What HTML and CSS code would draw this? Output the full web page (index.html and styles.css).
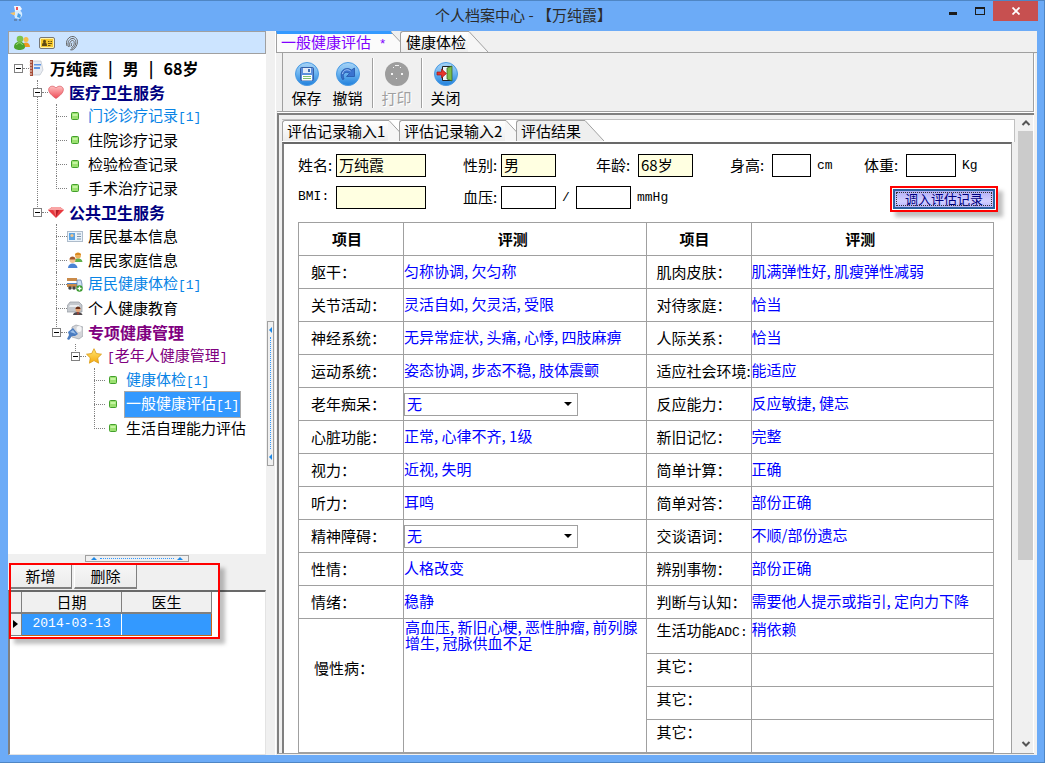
FILE: index.html
```html
<!DOCTYPE html>
<html lang="zh-CN">
<head>
<meta charset="utf-8">
<title>个人档案中心 - 【万纯霞】</title>
<link rel="stylesheet" href="styles.css">
</head>
<body>
<svg width="0" height="0" class="defs" aria-hidden="true">
  <defs>
    <linearGradient id="gDisc" x1="0" y1="0" x2="0" y2="1"><stop offset="0" stop-color="#a9d4f6"/><stop offset=".45" stop-color="#6fb6f0"/><stop offset="1" stop-color="#1f7fdc"/></linearGradient>
    <linearGradient id="gHeart" x1="0" y1="0" x2="0" y2="1"><stop offset="0" stop-color="#ffc0c0"/><stop offset="1" stop-color="#ee4a55"/></linearGradient>
    <linearGradient id="gStar" x1="0" y1="0" x2="0" y2="1"><stop offset="0" stop-color="#ffe873"/><stop offset="1" stop-color="#f6a90e"/></linearGradient>
    <symbol id="dot" viewBox="0 0 16 16"><rect x="4.5" y="4.5" width="7" height="7" rx="1" fill="#9be070" stroke="#43a02c"/><path d="M5.500 6h5v2h-5z" fill="#c4f5a2"/></symbol>
    <symbol id="people" viewBox="0 0 16 16"><circle cx="12" cy="4.500" r="2.500" fill="#f7bf4a"/><path d="M8 12c0-6 8-6 8 0z" fill="#f09a20"/><circle cx="6" cy="4" r="3.300" fill="#7cc450"/><path d="M0 12c0-7 11-7 11 0 0 4-11 4-11 0z" fill="#4da32e"/><path d="M2.500 10c1-3 5-3 6 0" stroke="#a7e07c" fill="none"/></symbol>
  </defs>
</svg>
<div class="window">
  <header class="titlebar">
    <svg class="app-icon" width="16" height="18" viewBox="0 0 16 18"><path d="M5 1h6l2 3-2 2H6z" fill="#f4f8ff"/><path d="M7 2h2v3H7z" fill="#e55"/><path d="M6 6c5-2 8 1 7 5l-3 3-4-1-1-4z" fill="#d5ecff"/><path d="M9 8l3 2-1 3-3-1z" fill="#4aa1e8"/><path d="M1 8l5-1v3H4z" fill="#f2c46d"/><path d="M5 14h3v2H5zM10 14h2v2h-2z" fill="#5f87b8"/></svg>
    <h1 class="title">个人档案中心 - 【万纯霞】</h1>
    <div class="win-controls">
      <button class="win-btn" aria-label="最小化"><svg width="10" height="10" viewBox="0 0 10 10"><path d="M1 6h8v3H1z" fill="#1c1c1c"/></svg></button>
      <button class="win-btn" aria-label="最大化"><svg width="10" height="10" viewBox="0 0 10 10"><path d="M0 1h10v8H0zM1 3v5h8V3z" fill-rule="evenodd" fill="#1c1c1c"/></svg></button>
      <button class="win-btn win-close" aria-label="关闭窗口"><svg width="8" height="8" viewBox="0 0 8 8"><path d="M.5.500l7 7m0-7l-7 7" stroke="#fff" stroke-width="1.800"/></svg></button>
    </div>
  </header>

  <div class="client">
    <aside class="sidebar">
      <div class="side-tools">
        <button class="icon-btn" aria-label="人员"><svg width="16" height="16"><use href="#people"/></svg></button>
        <button class="icon-btn" aria-label="身份证"><svg width="16" height="16" viewBox="0 0 16 16"><rect x=".5" y="2.500" width="15" height="11" rx="1.500" fill="#fff3a8" stroke="#777"/><rect x="2" y="4" width="12" height="8" fill="#f5c62a"/><path d="M3 11c0-3 1-3 1.500-3.500a1.500 1.500 0 112 0C7 8 8 8 8 11z" fill="#5f4a12"/><path d="M9 6.500h1.500m1 0H13M9 8.500h4M9 10.500h2.500" stroke="#6b5514"/></svg></button>
        <button class="icon-btn" aria-label="指纹"><svg width="16" height="16" viewBox="0 0 16 16" fill="none" stroke="#666"><path d="M3 11C1 6 5 1 9 1.500s6 5 3 10-6 3-6 3"/><path d="M4.500 12C3 8 5 4 8 3.500s5 3 3 7-4 3.500-4 3.500"/><path d="M6 12c-1-3 0-6 2-6.500s3 2 1.500 5L7.500 13"/><path d="M7.500 11c0-2 0-3 .7-3.300"/></svg></button>
      </div>
      <nav class="tree">
        <ul class="branch root">
          <li class="node"><div class="row patient"><button class="toggle" aria-label="折叠"></button><i class="link"></i>
            <svg width="16" height="16" viewBox="0 0 16 16"><path d="M2 1h10l2 9-3 5H2z" fill="#e8ecf2" stroke="#b6bcc6" stroke-width=".6"/><path d="M5 4h7v1.500H5zM5 7h6v2H5z" fill="#5d95e2"/><path d="M1 0h3v16H1z" fill="#a44b36"/><path d="M0 2h3M0 5h3M0 8h3M0 11h3M0 14h3" stroke="#f0ddd2"/></svg>
            <a href="#p" class="label strong"><span>万纯霞</span><span>|</span><span>男</span><span>|</span><span>68岁</span></a></div>
            <ul class="branch">
              <li class="node"><div class="row"><button class="toggle" aria-label="折叠"></button><i class="link"></i>
                <svg width="16" height="16" viewBox="0 0 16 16"><path d="M8 14.500C2 10.500 0 7 .8 4.500 2 1.500 6 1.500 8 4c2-2.500 6-2.500 7.200.5C16 7 14 10.500 8 14.500z" fill="url(#gHeart)" stroke="#d9505a" stroke-width=".7"/></svg>
                <a href="#a" class="label strong navy">医疗卫生服务</a></div>
                <ul class="branch">
                  <li class="node"><div class="row leaf"><i class="link"></i><svg width="16" height="16"><use href="#dot"/></svg><a href="#a1" class="label sky">门诊诊疗记录<b class="en">[1]</b></a></div></li>
                  <li class="node"><div class="row leaf"><i class="link"></i><svg width="16" height="16"><use href="#dot"/></svg><a href="#a2" class="label">住院诊疗记录</a></div></li>
                  <li class="node"><div class="row leaf"><i class="link"></i><svg width="16" height="16"><use href="#dot"/></svg><a href="#a3" class="label">检验检查记录</a></div></li>
                  <li class="node"><div class="row leaf"><i class="link"></i><svg width="16" height="16"><use href="#dot"/></svg><a href="#a4" class="label">手术治疗记录</a></div></li>
                </ul>
              </li>
              <li class="node"><div class="row"><button class="toggle" aria-label="折叠"></button><i class="link"></i>
                <svg width="16" height="16" viewBox="0 0 16 16"><path d="M4 3h8l4 3-8 8-8-8z" fill="#e8383f"/><path d="M4 3h8l4 3H0z" fill="#f9a5a5"/><path d="M5 6l3 7 3-7z" fill="#b51d27"/><path d="M5 6h3v7z" fill="#f26a6a"/></svg>
                <a href="#b" class="label strong navy">公共卫生服务</a></div>
                <ul class="branch">
                  <li class="node"><div class="row leaf"><i class="link"></i><svg width="16" height="16" viewBox="0 0 16 16"><rect x=".5" y="3.500" width="15" height="10" fill="#eaf3fb" stroke="#aebccb"/><rect x="2" y="5" width="6" height="7" fill="#5ba3e3"/><circle cx="5" cy="7.500" r="1.600" fill="#f0c48a"/><path d="M10 6h4M10 8.500h4M10 11h4" stroke="#7d93ab"/></svg><a href="#b1" class="label">居民基本信息</a></div></li>
                  <li class="node"><div class="row leaf"><i class="link"></i><svg width="16" height="16" viewBox="0 0 16 16"><path d="M7 10c0-5 8-5 8.500 0z" fill="#5eb04b"/><circle cx="11" cy="3.500" r="3" fill="#f0b15c"/><path d="M8 3c0-3 6-3 6 0z" fill="#d88a1f"/><path d="M1 16c0-6 9-6 9.500 0z" fill="#4b83d4"/><circle cx="5.500" cy="8" r="3" fill="#f4c391"/><path d="M2.500 7.500c0-4 6-4 6 0z" fill="#a2582a"/></svg><a href="#b2" class="label">居民家庭信息</a></div></li>
                  <li class="node"><div class="row leaf"><i class="link"></i><svg width="16" height="16" viewBox="0 0 16 16"><path d="M0 2h10v9H0z" fill="#c98a49"/><path d="M0 5h10v2H0z" fill="#fff"/><path d="M0 7h10v1H0z" fill="#4f87ce"/><path d="M10 4h4l1 4v4h-5z" fill="#cfe0f5" stroke="#5675a0" stroke-width=".7"/><circle cx="3" cy="12" r="1.800" fill="#444"/><circle cx="7" cy="12" r="1.800" fill="#444"/><circle cx="12.500" cy="12.500" r="3.200" fill="#37992c"/><path d="M12.500 10.500v4m-2-2h4" stroke="#fff" stroke-width="1.300"/></svg><a href="#b3" class="label sky">居民健康体检<b class="en">[1]</b></a></div></li>
                  <li class="node"><div class="row leaf"><i class="link"></i><svg width="16" height="16" viewBox="0 0 16 16"><path d="M3 2h9l3 3v7H0V6z" fill="#c5c9ce" stroke="#9498a0" stroke-width=".7"/><path d="M3 5h9v2H2z" fill="#eceff2"/><path d="M6 15c0-4 9-4 9.500 0z" fill="#4f4a4d"/><circle cx="11" cy="9.500" r="2.500" fill="#e9a675"/><path d="M8.500 9c0-3.500 5-3.500 5 0z" fill="#6b3119"/><path d="M10 12.500l1 2.500 1-2.500z" fill="#d03a28"/></svg><a href="#b4" class="label">个人健康教育</a></div></li>
                  <li class="node"><div class="row"><button class="toggle" aria-label="折叠"></button><i class="link"></i>
                    <svg width="16" height="16" viewBox="0 0 16 16"><path d="M5 3l4-2 7 2v9l-4 3-7-2z" fill="#d2d4d8" stroke="#9b9fa6" stroke-width=".7"/><ellipse cx="12" cy="5" rx="2.500" ry="3" fill="#f5f5f6"/><path d="M1 8l5-4 5 6-3 2H5l-3 4-2-1 2-4z" fill="#4a7cc0"/><path d="M3 8l3-2 3 4z" fill="#9cc0ea"/></svg>
                    <a href="#c" class="label strong purple">专项健康管理</a></div>
                    <ul class="branch">
                      <li class="node"><div class="row"><button class="toggle" aria-label="折叠"></button><i class="link"></i>
                        <svg width="16" height="16" viewBox="0 0 16 16"><path d="M8 .7l2.300 4.800 5.200.7-3.800 3.700.9 5.300L8 12.600l-4.600 2.600.9-5.300L.5 6.200l5.200-.7z" fill="url(#gStar)" stroke="#d99a15" stroke-width=".8"/></svg>
                        <a href="#c1" class="label purple"><b class="en">[</b>老年人健康管理<b class="en">]</b></a></div>
                        <ul class="branch">
                          <li class="node"><div class="row leaf"><i class="link"></i><svg width="16" height="16"><use href="#dot"/></svg><a href="#c2" class="label sky">健康体检<b class="en">[1]</b></a></div></li>
                          <li class="node"><div class="row leaf"><i class="link"></i><svg width="16" height="16"><use href="#dot"/></svg><a href="#c3" class="label selected">一般健康评估<b class="en">[1]</b></a></div></li>
                          <li class="node"><div class="row leaf"><i class="link"></i><svg width="16" height="16"><use href="#dot"/></svg><a href="#c4" class="label">生活自理能力评估</a></div></li>
                        </ul>
                      </li>
                    </ul>
                  </li>
                </ul>
              </li>
            </ul>
          </li>
        </ul>
      </nav>
      <div class="split-h"><div class="grip-h"><i class="tri-up"></i><i class="dots-h"></i><i class="tri-up"></i></div></div>
      <section class="records">
        <div class="rec-tools"><button class="rec-btn">新增</button><button class="rec-btn">删除</button></div>
        <div class="rec-box">
          <table class="rec-grid">
            <colgroup><col class="c-mark"><col class="c-date"><col class="c-doc"></colgroup>
            <thead><tr><th></th><th>日期</th><th>医生</th></tr></thead>
            <tbody><tr><td class="mark"><i class="tri-right"></i></td><td class="en">2014-03-13</td><td></td></tr></tbody>
          </table>
        </div>
        <div class="callout rec-callout"></div>
      </section>
    </aside>

    <div class="split-v"><div class="grip-v"><i class="tri-left"></i><i class="dots-v"></i><i class="tri-left"></i></div></div>

    <main class="workspace">
      <div class="tabs doc-tabs" role="tablist">
        <button class="tab current" role="tab"><span class="tab-text">一般健康评估<span class="en star"> *</span></span><svg class="slant" width="20" height="21" viewBox="0 0 20 21"><path d="M0 0l20 21H0z" fill="#fbfbfb"/><path d="M0 0h1l2 3H0z" fill="#3399ff"/><path d="M1 1l19 20" stroke="#a0a0a0"/></svg></button>
        <button class="tab" role="tab"><span class="tab-text">健康体检</span><svg class="slant" width="20" height="21" viewBox="0 0 20 21"><path d="M0 0l20 21H0z" fill="#f6f6f6"/><path d="M0 .5h1L20 21" stroke="#a0a0a0" fill="none"/></svg></button>
      </div>
      <div class="toolbar">
        <button class="tool"><svg width="24" height="24" viewBox="0 0 24 24"><circle cx="12" cy="12" r="11.500" fill="url(#gDisc)" stroke="#4a9be4"/><rect x="5.500" y="5.500" width="13" height="13" rx="1" fill="#5c8fdc" stroke="#3560a8"/><path d="M8 6h8v5H8z" fill="#e4ecf8"/><path d="M13 7h2v3h-2z" fill="#3f6db3"/><path d="M7 13h10v5.500H7z" fill="#fff"/><path d="M8 14.500h8M8 16.500h8" stroke="#7fbf71"/></svg><span>保存</span></button>
        <button class="tool"><svg width="24" height="24" viewBox="0 0 24 24"><circle cx="12" cy="12" r="11.500" fill="url(#gDisc)" stroke="#4a9be4"/><path d="M6.500 17.500C2 10 9 3.500 15.500 8L18.500 6v8.500h-8l3-3C9.500 8.500 5.500 12 8 17z" fill="#3a73cf" stroke="#2456a8" stroke-width=".8"/><path d="M6.500 12c.5-4 5-5.500 8-3" fill="none" stroke="#a5c8f5"/></svg><span>撤销</span></button>
        <i class="sep"></i>
        <button class="tool" disabled><svg width="24" height="24" viewBox="0 0 24 24"><circle cx="12" cy="12" r="12" fill="#9d9d9d"/><path d="M6 11h2v2H6zM16 11h2v2h-2zM10 3h4v1h-4zM8 5h1v1H8zM15 5h1v1h-1zM11 16h1v1h-1z" fill="#f3f3f3"/></svg><span>打印</span></button>
        <i class="sep"></i>
        <button class="tool"><svg width="24" height="24" viewBox="0 0 24 24"><circle cx="12" cy="12" r="11.500" fill="url(#gDisc)" stroke="#4a9be4"/><path d="M8.500 4.500h9v14h-9z" fill="#eef4fb" stroke="#222"/><path d="M13 6l5-2v15l-5-2z" fill="#7cbc4c" stroke="#2f5b1b" stroke-width=".7"/><path d="M3 10h4.500V7l5 4.500-5 4.500v-3H3z" fill="#e8352c" stroke="#9c1a14" stroke-width=".7"/></svg><span>关闭</span></button>
      </div>
      <div class="scroller">
        <div class="panel">
          <div class="tabs page-tabs" role="tablist">
            <button class="tab" role="tab"><span class="tab-text">评估记录输入1</span><svg class="slant" width="20" height="21" viewBox="0 0 20 21"><path d="M0 0l20 21H0z" fill="#f6f6f6"/><path d="M0 .5h1L20 21" stroke="#a0a0a0" fill="none"/></svg></button>
            <button class="tab" role="tab"><span class="tab-text">评估记录输入2</span><svg class="slant" width="20" height="21" viewBox="0 0 20 21"><path d="M0 0l20 21H0z" fill="#f6f6f6"/><path d="M0 .5h1L20 21" stroke="#a0a0a0" fill="none"/></svg></button>
            <button class="tab open" role="tab"><span class="tab-text">评估结果</span><svg class="slant" width="20" height="21" viewBox="0 0 20 21"><path d="M0 0l20 21H0z" fill="#efefef"/><path d="M0 .5h1L20 21" stroke="#a0a0a0" fill="none"/></svg></button>
          </div>
          <div class="page">
            <form class="basics">
              <div class="field"><label for="f1">姓名:</label><input id="f1" class="box w90 fill" value="万纯霞"></div>
              <div class="field"><label for="f2">性别:</label><input id="f2" class="box w55 fill" value="男"></div>
              <div class="field wide"><label for="f3">年龄:</label><input id="f3" class="box w55 fill" value="68岁"></div>
              <div class="field wide"><label for="f4">身高:</label><input id="f4" class="box w39"><span class="unit en">cm</span></div>
              <div class="field wide"><label for="f5">体重:</label><input id="f5" class="box w50"><span class="unit en">Kg</span></div>
              <div class="field"><label for="f6" class="en">BMI:</label><input id="f6" class="box w90 fill"></div>
              <div class="field pressure"><label for="f7">血压:</label><input id="f7" class="box w55"><span class="slash en">/</span><input class="box w55" aria-label="舒张压"><span class="unit en">mmHg</span></div>
              <div class="action"><button type="button" class="load-btn">调入评估记录</button></div>
            </form>
            <table class="result">
              <colgroup><col class="k"><col><col class="k"><col></colgroup>
              <thead><tr><th>项目</th><th>评测</th><th>项目</th><th>评测</th></tr></thead>
              <tbody>
                <tr><th>躯干：</th><td>匀称协调, 欠匀称</td><th>肌肉皮肤：</th><td>肌满弹性好, 肌瘦弹性减弱</td></tr>
                <tr><th>关节活动：</th><td>灵活自如, 欠灵活, 受限</td><th>对待家庭：</th><td>恰当</td></tr>
                <tr><th>神经系统：</th><td>无异常症状, 头痛, 心悸, 四肢麻痹</td><th>人际关系：</th><td>恰当</td></tr>
                <tr><th>运动系统：</th><td>姿态协调, 步态不稳, 肢体震颤</td><th>适应社会环境:</th><td>能适应</td></tr>
                <tr><th><label for="s1">老年痴呆：</label></th><td class="pick"><div class="combo"><select id="s1"><option>无</option></select><i class="tri-down"></i></div></td><th>反应能力：</th><td>反应敏捷, 健忘</td></tr>
                <tr><th>心脏功能：</th><td>正常, 心律不齐, 1级</td><th>新旧记忆：</th><td>完整</td></tr>
                <tr><th>视力：</th><td>近视, 失明</td><th>简单计算：</th><td>正确</td></tr>
                <tr><th>听力：</th><td>耳鸣</td><th>简单对答：</th><td>部份正确</td></tr>
                <tr><th><label for="s2">精神障碍：</label></th><td class="pick"><div class="combo"><select id="s2"><option>无</option></select><i class="tri-down"></i></div></td><th>交谈语词：</th><td>不顺/部份遗忘</td></tr>
                <tr><th>性情：</th><td>人格改变</td><th>辨别事物：</th><td>部份正确</td></tr>
                <tr><th>情绪：</th><td>稳静</td><th>判断与认知：</th><td>需要他人提示或指引, 定向力下降</td></tr>
                <tr class="high"><th rowspan="4" class="chronic">慢性病：</th><td rowspan="4" class="memo">高血压, 新旧心梗, 恶性肿瘤, 前列腺增生, 冠脉供血不足</td><th>生活功能<span class="en">ADC:</span></th><td>稍依赖</td></tr>
                <tr class="high"><th>其它：</th><td></td></tr>
                <tr class="high"><th>其它：</th><td></td></tr>
                <tr class="high"><th>其它：</th><td></td></tr>
              </tbody>
            </table>
          </div>
        </div>
        <div class="scrollbar">
          <svg width="16" height="16" viewBox="0 0 16 16"><path d="M4.500 10L8 6.500l3.500 3.500" fill="none" stroke="#555" stroke-width="2"/></svg>
          <div class="track"><div class="thumb"></div></div>
          <svg width="16" height="18" viewBox="0 0 16 18"><path d="M4.500 7L8 10.500 11.500 7" fill="none" stroke="#555" stroke-width="2"/></svg>
        </div>
      </div>
    </main>
  </div>
</div>
</body>
</html>
```
FILE: styles.css
```css
* { box-sizing: border-box; }
html, body { height: 100%; }
body {
  margin: 0;
  font: 15px/20px "Noto Sans CJK SC", sans-serif;
  color: #000;
}
button, input, select { font: inherit; color: inherit; margin: 0; padding: 0; border: 0; background: none; border-radius: 0; }
a { color: inherit; text-decoration: none; }
svg { display: block; flex: none; }
ul { list-style: none; margin: 0; padding: 0; }
.defs { position: absolute; }
.en { font-family: "Liberation Mono", "Noto Sans CJK SC", monospace; font-size: 13px; font-weight: normal; }

.window {
  height: 100vh;
  display: flex;
  flex-direction: column;
  background: #6cabf7;
  border: 1px solid #4f86c4;
  border-left: 0;
}
.titlebar { height: 30px; flex: none; display: grid; grid-template-columns: 1fr auto 1fr; padding: 0 6px 0 9px; }
.app-icon { margin-top: 4px; }
.title { margin: 0; font-size: 15px; font-weight: normal; line-height: 28px; color: #2b2b2b; white-space: nowrap; }
.win-controls { display: flex; justify-content: flex-end; }
.win-btn { width: 27px; height: 20px; display: flex; align-items: center; justify-content: center; }
.win-close { width: 45px; background: #c75050; }

.client { flex: 1; min-height: 0; display: flex; margin: 0 7px 7px 8px; background: #f0f0f0; }

.sidebar { width: 258px; flex: none; display: flex; flex-direction: column; }
.side-tools { height: 23px; flex: none; display: flex; align-items: center; gap: 9px; padding-left: 5px; background: #cce4ff; border: 1px solid #a0a0a0; }
.icon-btn { width: 16px; height: 16px; }
.tree { flex: 1; min-height: 0; overflow: hidden; background: #fff; padding: 2px 0 0 6px; }
.branch .branch { padding-left: 19px; }
.node { position: relative; }
.branch .branch > .node::before {
  content: "";
  position: absolute;
  left: 4px;
  top: 0;
  bottom: 0;
  border-left: 1px dotted #808080;
}
.branch .branch > .node:last-child::before { bottom: auto; height: 13px; }
.row { display: flex; align-items: center; height: 24px; position: relative; }
.leaf { padding-left: 4px; }
.link { width: 6px; border-top: 1px dotted #808080; flex: none; }
.leaf .link { width: 11px; }
.toggle { width: 9px; height: 9px; flex: none; border: 1px solid #808080; background: linear-gradient(#000, #000) center / 5px 1px no-repeat #fff; }
.label { margin-left: 3px; padding: 0 2px; line-height: 22px; border: 1px solid transparent; border-width: 1px 0; white-space: nowrap; }
.strong { font-size: 16px; font-weight: bold; }
.patient .label { display: flex; gap: 10px; }
.navy { color: #000080; }
.purple { color: #800080; }
.sky { color: #0a84e6; }
.selected { color: #fff; background: #3399ff; border: 1px solid #a9a9a9; padding: 0 1px; }

.split-h { height: 9px; flex: none; display: flex; justify-content: center; align-items: center; }
.grip-h { width: 104px; height: 7px; border: 1px solid #a0a0a0; display: flex; align-items: center; justify-content: space-between; padding: 0 5px; }
.dots-h { width: 74px; border-top: 1px dotted #3399ff; }
.tri-up { border: 3px solid transparent; border-top: 0; border-bottom-color: #1e88e5; }
.split-v { width: 9px; flex: none; display: flex; align-items: center; justify-content: center; }
.grip-v { width: 7px; height: 145px; border: 1px solid #a0a0a0; display: flex; flex-direction: column; align-items: center; justify-content: space-between; padding: 5px 0; }
.dots-v { height: 112px; border-left: 1px dotted #3399ff; }
.tri-left { border: 3px solid transparent; border-left: 0; border-right-color: #1e88e5; }

.records { height: 192px; flex: none; position: relative; display: flex; flex-direction: column; }
.rec-tools { display: flex; gap: 2px; padding-left: 1px; height: 27px; flex: none; }
.rec-btn { width: 63px; height: 26px; line-height: 22px; background: linear-gradient(#f6f6f6, #ececec); border: 1px solid #fff; border-right: 1px solid #808080; border-bottom: 2px solid #808080; }
.rec-box { flex: 1; background: #fff; border: 1px solid #e3e3e3; border-top: 2px solid #696969; border-left: 2px solid #808080; }
.rec-grid { table-layout: fixed; width: 201px; border-collapse: collapse; }
.c-mark { width: 11px; }
.c-date { width: 100px; }
.c-doc { width: 90px; }
.rec-grid th { height: 21px; padding: 0; font-weight: normal; line-height: 18px; background: #f0f0f0; border-right: 1px solid #808080; border-bottom: 2px solid #808080; }
.rec-grid td { height: 22px; padding: 0; text-align: center; color: #fff; background: #3399ff; border: 1px solid #c86414; border-right-color: #fff; }
.rec-grid td:last-child { border-right-color: #c86414; }
.rec-grid td.mark { background: #f0f0f0; border: 1px solid #808080; }
.tri-right { display: block; width: 5px; margin-left: 2px; border: 4px solid transparent; border-right: 0; border-left: 5px solid #000; }
.callout { border: 2px solid #f00; box-shadow: 5px 5px 4px rgba(0, 0, 0, .25); pointer-events: none; }
.rec-callout { position: absolute; left: 1px; top: 0; width: 211px; height: 76px; }

.workspace { flex: 1; min-width: 0; display: flex; flex-direction: column; border-left: 1px solid #fff; }
.tabs { display: flex; flex: none; }
.tab { display: flex; height: 21px; }
.tab-text { height: 21px; line-height: 19px; padding-left: 4px; white-space: nowrap; text-align: left; background: linear-gradient(#fff, #ededed); border: 1px solid #a0a0a0; border-width: 1px 0 0 1px; border-top-left-radius: 3px; }
.current .tab-text { width: 114px; line-height: 16px; background: #fbfbfb; border-top: 3px solid #3399ff; border-top-left-radius: 0; color: #8000ff; }
.star { line-height: 16px; white-space: pre; }
.doc-tabs .tab:last-child .tab-text { width: 68px; padding-left: 5px; }
.doc-tabs .tab:last-child { margin-left: -10px; }
.doc-tabs { border-bottom: 1px solid #a0a0a0; }

.toolbar { flex: none; height: 59px; display: flex; align-items: center; margin: 0 3px 0 1px; padding: 5px 0 0 9px; background: #f0f0f0; border: 1px solid #a0a0a0; border-width: 0 1px 1px 0; box-shadow: inset 5px 0 #f0f0f0, inset 6px 0 #a0a0a0, 1px 1px #fff; }
.tool { width: 41px; display: flex; flex-direction: column; align-items: center; line-height: 20px; gap: 2px; }
.tool:disabled { color: #a0a0a0; text-shadow: 1px 1px #fff; }
.sep { width: 2px; height: 50px; margin: 0 2px 4px 4px; border-left: 1px solid #a0a0a0; border-right: 1px solid #fff; }

.scroller { flex: 1; min-height: 0; overflow: hidden; display: flex; margin: 1px 3px 1px 1px; border: 2px solid #808080; border-right: 0; border-bottom: 1px solid #a0a0a0; }
.panel { flex: 1; min-width: 0; display: flex; flex-direction: column; padding: 4px 0 0 3px; }
.page-tabs { background: #fff; border: 1px solid #c0c0c0; border-left: 0; border-bottom: 0; height: 23px; }
.page-tabs .tab-text { width: 106px; }
.page-tabs .open .tab-text { width: 68px; background: #efefef; }
.page-tabs .tab + .tab { margin-left: -9px; }
.page { flex: 1 0 auto; margin-right: 3px; padding: 10px 17px 0 14px; background: #fff; border-left: 2px solid #808080; border-right: 1px solid #a0a0a0; border-top: 2px solid #696969; }

.basics { display: grid; grid-template-columns: 165px 133px 134px 134px 1fr; row-gap: 9px; }
.field { display: flex; align-items: center; height: 23px; }
.field label { width: 38px; flex: none; white-space: nowrap; line-height: 18px; padding-bottom: 2px; }
.wide label { width: 42px; }
.box { height: 23px; padding: 0 2px 2px; border: 1px solid #000; background: #fff; min-width: 0; line-height: 18px; }
.fill { background: #ffffe1; }
.w90 { width: 90px; }
.w55 { width: 55px; }
.w50 { width: 50px; }
.w39 { width: 39px; }
.unit { margin-left: 6px; }
.slash { width: 20px; text-align: center; }
.pressure { grid-column: span 3; }
.action { display: flex; justify-content: flex-end; align-items: center; }
.load-btn { width: 108px; height: 26px; font-size: 13px; line-height: 18px; color: #000080; background: linear-gradient(#a9a4f4, #d2cfff 60%, #aaa4fa) padding-box; border: 2px solid #f00; box-shadow: inset 0 0 0 1px #fff, inset 0 0 0 3px #2b5f9e, 5px 5px 4px rgba(0, 0, 0, .25); outline: 1px dotted #333; outline-offset: -7px; margin: 0 -4px -3px 0; }

.result { width: 100%; margin-top: 13px; table-layout: fixed; border-collapse: collapse; }
.result .k { width: 105px; }
.result th, .result td { height: 33px; padding: 0; border: 1px solid #a0a0a0; white-space: nowrap; text-align: left; font-weight: normal; }
.result thead th { text-align: center; font-weight: bold; padding-right: 8px; }
.result thead th:nth-child(even) { padding-right: 24px; }
.result tbody th { padding: 0 0 0 12px; }
.result tbody th:nth-child(3) { padding-left: 10px; }
.result td { color: #00f; padding: 0 0 3px; }
.result .pick { padding: 0; }
.result .high th { padding: 0 0 9px 10px; }
.result .high td { padding-bottom: 14px; }
.result .high .chronic { padding: 0 0 36px 15px; }
.result .high .memo { vertical-align: top; padding: 0 1px; line-height: 16px; white-space: normal; }
.combo { display: grid; align-items: center; width: 174px; }
.combo select { grid-area: 1 / 1; width: 174px; height: 23px; appearance: none; padding: 0 2px; border: 1px solid #a0a0a0; background: #fff; line-height: 20px; }
.tri-down { grid-area: 1 / 1; justify-self: end; margin-right: 6px; border: 4px solid transparent; border-bottom: 0; border-top-color: #000; pointer-events: none; }

.scrollbar { width: 19px; flex: none; display: flex; flex-direction: column; padding: 0 0 0 3px; background: #f0f0f0; border-right: 1px solid #fff; }
.track { flex: 1; }
.thumb { width: 15px; height: 71%; background: #cbcbcb; }
```
